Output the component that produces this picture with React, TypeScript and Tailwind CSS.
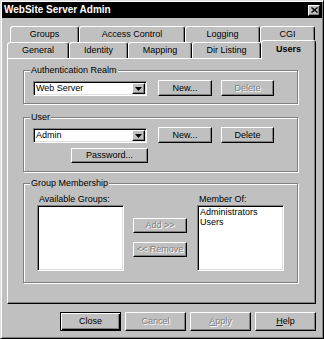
import React from "react";

const raised =
  "border border-t-white border-l-white border-r-black border-b-black shadow-[inset_-1px_-1px_0_#808080]";
const sunken =
  "border border-t-[#808080] border-l-[#808080] border-r-white border-b-white shadow-[inset_1px_1px_0_#000,inset_-1px_-1px_0_#dfdfdf]";
const etched = "border border-[#808080] shadow-[1px_1px_0_#fff,inset_1px_1px_0_#fff]";
const dim = "text-[#808080] [text-shadow:1px_1px_0_#fff]";
const tab =
  "h-[16px] border-l border-t border-r border-l-white border-t-white border-r-black shadow-[inset_-1px_0_0_#808080] rounded-t-[3px] flex items-center justify-center bg-[#c0c0c0]";

function Button({
  children,
  className = "",
  disabled = false,
}: {
  children: React.ReactNode;
  className?: string;
  disabled?: boolean;
}) {
  return (
    <div
      className={`${raised} flex items-center justify-center leading-none ${
        disabled ? dim : "text-black"
      } ${className}`}
    >
      {children}
    </div>
  );
}

function Combo({ value }: { value: string }) {
  return (
    <div className={`${sunken} w-[114px] h-[15px] bg-white flex items-center`}>
      <span className="flex-1 pl-[2px] leading-none">{value}</span>
      <div
        className={`${raised} w-[13px] h-[11px] bg-[#c0c0c0] mr-[1px] flex items-center justify-center`}
      >
        <svg width="7" height="4" viewBox="0 0 7 4">
          <path d="M0 0h7L3.5 4z" fill="#000" />
        </svg>
      </div>
    </div>
  );
}

function Group({
  label,
  className,
  children,
}: {
  label: string;
  className: string;
  children: React.ReactNode;
}) {
  return (
    <div className={`relative ${etched} ${className}`}>
      <span className="absolute left-[6px] top-[-6px] px-[1px] bg-[#c0c0c0] leading-[11px]">
        {label}
      </span>
      {children}
    </div>
  );
}

export default function App() {
  return (
    <div className="w-[324px] h-[339px] bg-[#c0c0c0] border border-t-[#dfdfdf] border-l-[#dfdfdf] border-r-black border-b-black shadow-[inset_1px_1px_0_#fff,inset_-1px_-1px_0_#808080] p-[1px] text-[9px] text-black font-['Liberation_Sans',Arial,sans-serif] flex flex-col">
      {/* title bar */}
      <div className="h-[16px] bg-black flex items-center justify-between px-[2px]">
        <span className="text-white font-bold text-[10px] leading-none">WebSite Server Admin</span>
        <div className={`${raised} w-[12px] h-[11px] bg-[#c0c0c0] flex items-center justify-center`}>
          <svg width="7" height="6" viewBox="0 0 7 6">
            <path d="M0.5 0.5L6.5 5.5M6.5 0.5L0.5 5.5" stroke="#000" strokeWidth="1.4" />
          </svg>
        </div>
      </div>

      {/* back row of tabs */}
      <div className="mt-[8px] ml-[8px] flex h-[14px] items-start">
        <div className={`${tab} w-[69px]`}>Groups</div>
        <div className={`${tab} w-[106px]`}>Access Control</div>
        <div className={`${tab} w-[75px]`}>Logging</div>
        <div className={`${tab} w-[55px]`}>CGI</div>
      </div>

      {/* front row of tabs */}
      <div className="ml-[5px] flex items-end h-[18px]">
        <div className={`${tab} w-[62px]`}>General</div>
        <div className={`${tab} w-[59px]`}>Identity</div>
        <div className={`${tab} w-[64px]`}>Mapping</div>
        <div className={`${tab} w-[69px]`}>Dir Listing</div>
        <div className={`${tab} w-[55px] h-[19px] mb-[-1px] relative z-10 font-bold`}>Users</div>
      </div>

      {/* panel */}
      <div className="ml-[5px] w-[309px] h-[246px] border border-t-white border-l-white border-r-black border-b-black shadow-[inset_-1px_-1px_0_#808080] pl-[15px] pt-[11px] flex flex-col">
        <Group label="Authentication Realm" className="w-[275px] h-[34px]">
          <div className="flex items-start pt-[10px] pl-[9px]">
            <Combo value="Web Server" />
            <Button className="ml-[11px] w-[54px] h-[16px] -mt-[1px]">New...</Button>
            <Button className="ml-[9px] w-[53px] h-[16px] -mt-[1px]" disabled>
              Delete
            </Button>
          </div>
        </Group>

        <Group label="User" className="mt-[13px] w-[275px] h-[55px]">
          <div className="flex items-start pt-[10px] pl-[9px]">
            <Combo value="Admin" />
            <Button className="ml-[11px] w-[54px] h-[16px] -mt-[1px]">New...</Button>
            <Button className="ml-[9px] w-[53px] h-[16px] -mt-[1px]">Delete</Button>
          </div>
          <Button className="ml-[47px] mt-[5px] w-[77px] h-[15px]">Password...</Button>
        </Group>

        <Group label="Group Membership" className="mt-[11px] w-[275px] h-[100px]">
          <div className="flex items-start pt-[10px] pl-[13px]">
            <div className="w-[87px] flex flex-col">
              <span className="pl-[2px] h-[10px] leading-[10px]">Available Groups:</span>
              <div className={`${sunken} mt-[1px] h-[66px] bg-white`} />
            </div>
            <div className="ml-[9px] w-[54px] pt-[24px] flex flex-col">
              <Button className="h-[15px]" disabled>
                Add &gt;&gt;
              </Button>
              <Button className="mt-[9px] h-[15px]" disabled>
                &lt;&lt; Remove
              </Button>
            </div>
            <div className="ml-[10px] w-[87px] flex flex-col">
              <span className="pl-[2px] h-[10px] leading-[10px]">Member Of:</span>
              <div className={`${sunken} mt-[1px] h-[66px] bg-white pl-[2px] pt-[1px] flex flex-col`}>
                <span className="leading-[10px]">Administrators</span>
                <span className="leading-[10px]">Users</span>
              </div>
            </div>
          </div>
        </Group>
      </div>

      {/* dialog buttons */}
      <div className="ml-[5px] mt-[8px] w-[309px] flex justify-end gap-[4px]">
        <div className="w-[61px] h-[19px] border border-black shadow-[inset_1px_1px_0_#fff,inset_-1px_-1px_0_#000,inset_-2px_-2px_0_#808080] flex items-center justify-center leading-none">
          Close
        </div>
        <Button className="w-[61px] h-[19px]" disabled>
          Cancel
        </Button>
        <Button className="w-[61px] h-[19px]" disabled>
          <span className="underline">A</span>pply
        </Button>
        <Button className="w-[61px] h-[19px]">
          <span className="underline">H</span>elp
        </Button>
      </div>
    </div>
  );
}
